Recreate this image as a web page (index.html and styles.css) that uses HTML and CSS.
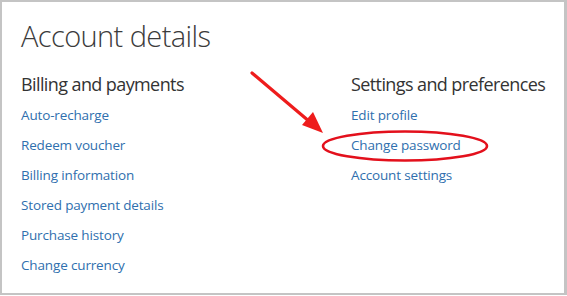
FILE: index.html
```html
<!DOCTYPE html>
<html lang="en">
<head>
    <meta charset="UTF-8">
    <meta name="viewport" content="width=device-width, initial-scale=1.0">
    <title>Account details</title>
    <link rel="stylesheet" href="styles.css">
</head>
<body>
    <div class="page">
        <h1 class="titulo">Account details</h1>

        <div class="colunas">
            <section class="grupo">
                <h2>Billing and payments</h2>
                <a href="#">Auto-recharge</a>
                <a href="#">Redeem voucher</a>
                <a href="#">Billing information</a>
                <a href="#">Stored payment details</a>
                <a href="#">Purchase history</a>
                <a href="#">Change currency</a>
            </section>

            <section class="grupo">
                <h2>Settings and preferences</h2>
                <a href="#">Edit profile</a>
                <a href="#">Change password</a>
                <a href="#">Account settings</a>
            </section>
        </div>

        <!-- annotation drawn over the page -->
        <svg class="marcacao" width="567" height="296" viewBox="0 0 567 296">
            <line x1="252" y1="73" x2="310" y2="122" stroke="#ee1c1c" stroke-width="3.2" stroke-linecap="round"/>
            <polygon points="323,133 302,125 313,112" fill="#ee1c1c"/>
            <ellipse cx="405" cy="146" rx="82" ry="14.5" fill="none" stroke="#e3101c" stroke-width="2.6"/>
        </svg>
    </div>
</body>
</html>
```

FILE: styles.css
```css
* {
    margin: 0;
    padding: 0;
    box-sizing: border-box;
}

html, body {
    background-color: white;
}

body {
    font-family: "Open Sans", "Noto Sans", Arial, sans-serif;
}

.page {
    position: relative;
    width: 567px;
    height: 295px;
    border: 2px solid #c4c4c4;
    border-right-width: 3px;
    padding: 14px 0 0 19px;
}

.titulo {
    font-size: 29px;
    font-weight: 300;
    line-height: 40px;
    color: #3b3b3b;
    letter-spacing: -0.6px;
    margin-bottom: 15px;
}

.colunas {
    display: grid;
    grid-template-columns: 330px 1fr;
}

.grupo {
    display: flex;
    flex-direction: column;
    align-items: flex-start;
}

.grupo h2 {
    font-size: 18px;
    font-weight: 400;
    line-height: 26px;
    color: #333;
    letter-spacing: -0.6px;
    white-space: nowrap;
    margin-bottom: 3px;
}

.grupo a {
    font-size: 13.5px;
    line-height: 30px;
    color: #2f6fae;
    letter-spacing: -0.15px;
    text-decoration: none;
}

.grupo a:hover {
    text-decoration: underline;
}

.marcacao {
    position: absolute;
    left: -2px;
    top: -2px;
    pointer-events: none;
}
```
